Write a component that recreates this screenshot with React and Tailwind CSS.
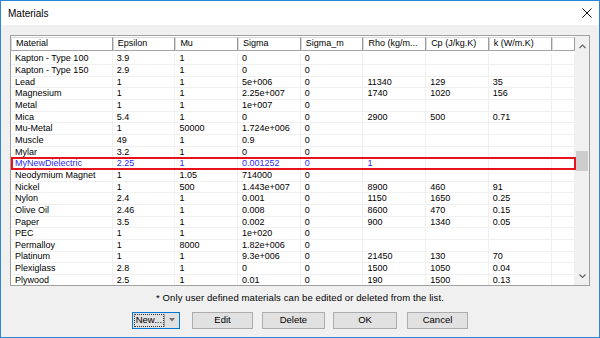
import React from "react";

const FONT = "font-['Liberation_Sans',Arial,sans-serif]";

const COL_W = [
  "w-[101.7px]",
  "w-[62.7px]",
  "w-[62.7px]",
  "w-[62.7px]",
  "w-[62.7px]",
  "w-[62.7px]",
  "w-[62.7px]",
  "w-[62.7px]",
  "flex-1",
];

const HEAD = ["Material", "Epsilon", "Mu", "Sigma", "Sigma_m", "Rho (kg/m...", "Cp (J/kg.K)", "k (W/m.K)", ""];

const ROWS = [
  ["Kapton - Type 100", "3.9", "1", "0", "0", "", "", ""],
  ["Kapton - Type 150", "2.9", "1", "0", "0", "", "", ""],
  ["Lead", "1", "1", "5e+006", "0", "11340", "129", "35"],
  ["Magnesium", "1", "1", "2.25e+007", "0", "1740", "1020", "156"],
  ["Metal", "1", "1", "1e+007", "0", "", "", ""],
  ["Mica", "5.4", "1", "0", "0", "2900", "500", "0.71"],
  ["Mu-Metal", "1", "50000", "1.724e+006", "0", "", "", ""],
  ["Muscle", "49", "1", "0.9", "0", "", "", ""],
  ["Mylar", "3.2", "1", "0", "0", "", "", ""],
  ["MyNewDielectric", "2.25", "1", "0.001252", "0", "1", "", ""],
  ["Neodymium Magnet", "1", "1.05", "714000", "0", "", "", ""],
  ["Nickel", "1", "500", "1.443e+007", "0", "8900", "460", "91"],
  ["Nylon", "2.4", "1", "0.001", "0", "1150", "1650", "0.25"],
  ["Olive Oil", "2.46", "1", "0.008", "0", "8600", "470", "0.15"],
  ["Paper", "3.5", "1", "0.002", "0", "900", "1340", "0.05"],
  ["PEC", "1", "1", "1e+020", "0", "", "", ""],
  ["Permalloy", "1", "8000", "1.82e+006", "0", "", "", ""],
  ["Platinum", "1", "1", "9.3e+006", "0", "21450", "130", "70"],
  ["Plexiglass", "2.8", "1", "0", "0", "1500", "1050", "0.04"],
  ["Plywood", "2.5", "1", "0.01", "0", "190", "1500", "0.13"],
];

function Chevron({ down = false }) {
  return (
    <svg width="7" height="5" viewBox="0 0 7 5" className="block">
      <polyline
        points={down ? "0.5,0.5 3.5,3.5 6.5,0.5" : "0.5,4 3.5,1 6.5,4"}
        fill="none"
        stroke="#606060"
        strokeWidth="1.1"
      />
    </svg>
  );
}

function Btn({ children, w, ml }) {
  return (
    <div className={`${w} ${ml} h-[17px] bg-[#e1e1e1] border border-[#adadad] flex items-center justify-center text-[9.5px] text-black`}>
      {children}
    </div>
  );
}

export default function App() {
  return (
    <div className={`w-[600px] h-[338px] border border-[#2e86d8] flex flex-col bg-[#f0f0f0] ${FONT} text-black`}>
      {/* title bar */}
      <div className="h-[24px] bg-white flex items-center justify-between pl-[7px] pr-[7px]">
        <span className="text-[10px]">Materials</span>
        <svg width="10" height="10" viewBox="0 0 10 10" className="block">
          <path d="M0.5 0.5 L9.5 9.5 M9.5 0.5 L0.5 9.5" stroke="#111" strokeWidth="1" />
        </svg>
      </div>

      <div className="flex-1 flex flex-col px-[9px] pt-[10px]">
        {/* list */}
        <div className="w-[580px] h-[251px] border border-[#a0a0a0] bg-white flex overflow-hidden">
          <div className="w-[564px] flex flex-col">
            <div className="h-[17.5px] shrink-0 flex items-start pt-[1px]">
              {HEAD.map((h, i) => (
                <div
                  key={i}
                  className={`${COL_W[i]} shrink-0 h-[14px] border-t border-l border-[#d8d8d8] border-b border-b-[#a5a5a5] border-r border-r-[#999] bg-white flex items-center pl-[4px] text-[9px] whitespace-nowrap overflow-hidden`}
                >
                  {h}
                </div>
              ))}
            </div>
            <div className="relative">
              {ROWS.map((r, ri) => {
                const mine = ri === 9;
                return (
                  <div key={ri} className="h-[11.67px] flex border-b border-[#f0f0f0]">
                    {[...r, ""].map((c, ci) => (
                      <div
                        key={ci}
                        className={`${COL_W[ci]} shrink-0 border-r border-[#f0f0f0] flex items-center pl-[4px] text-[9px] leading-none whitespace-nowrap overflow-hidden ${mine ? "text-[#2b2bf0]" : "text-black"}`}
                      >
                        {c}
                      </div>
                    ))}
                  </div>
                );
              })}
              <div className="absolute left-0 right-[-1px] top-[103.2px] h-[13.5px] border-2 border-[#e8121c]" />
            </div>
          </div>
          {/* scrollbar */}
          <div className="w-[14px] bg-[#f0f0f0] flex flex-col items-center">
            <div className="h-[17px] flex items-center justify-center pt-[3px]">
              <Chevron />
            </div>
            <div className="flex-1 w-full flex flex-col">
              <div className="h-[98px]" />
              <div className="h-[20px] mx-[1px] bg-[#cdcdcd]" />
              <div className="flex-1" />
            </div>
            <div className="h-[14px] flex items-center justify-center pb-[3px]">
              <Chevron down />
            </div>
          </div>
        </div>

        <div className="mt-[6px] h-[11px] leading-[11px] text-center text-[9.5px] tracking-[0.1px]">
          * Only user defined materials can be edited or deleted from the list.
        </div>

        <div className="mt-[8.5px] flex justify-center">
          <div className="w-[48.3px] h-[17px] border border-[#0078d7] bg-[#e1e1e1] flex items-stretch">
            <div className="flex-1 flex items-center pl-[1px] py-[1px]">
              <div className="w-full h-full outline outline-1 outline-dotted outline-[#333] -outline-offset-1 flex items-center pl-[2px] text-[9.5px]">
                New...
              </div>
            </div>
            <div className="w-[15px] my-[1px] border-l border-[#a0a0a0] flex items-center justify-center">
              <svg width="6" height="4" viewBox="0 0 6 4" className="block">
                <polygon points="0,0 6,0 3,3.5" fill="#707070" />
              </svg>
            </div>
          </div>
          <Btn w="w-[61.7px]" ml="ml-[11.7px]">Edit</Btn>
          <Btn w="w-[63.3px]" ml="ml-[8.4px]">Delete</Btn>
          <Btn w="w-[63.4px]" ml="ml-[8.3px]">OK</Btn>
          <Btn w="w-[61.6px]" ml="ml-[10px]">Cancel</Btn>
        </div>
      </div>
    </div>
  );
}
